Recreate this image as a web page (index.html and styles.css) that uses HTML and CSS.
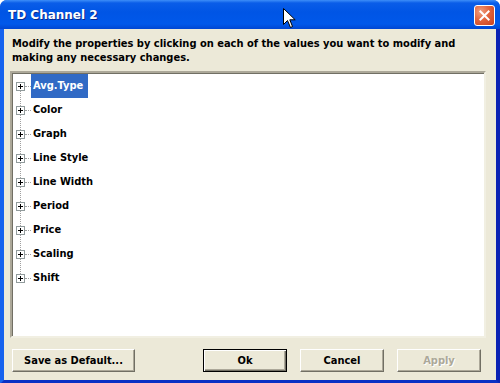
FILE: index.html
```html
<!DOCTYPE html>
<html>
  <head>
    <title>TD Channel 2</title>
    <link rel="stylesheet" href="styles.css">
  </head>
  <body>
    <div class="window">
      <div class="titlebar">
        <span class="title">TD Channel 2</span>
        <button class="close-btn" title="Close">
          <svg width="21" height="21" viewBox="0 0 21 21">
            <path d="M6 6L15 15M15 6L6 15" stroke="#fff" stroke-width="2.2" stroke-linecap="square" />
          </svg>
        </button>
      </div>
      <div class="client">
        <p class="hint">Modify the properties by clicking on each of the values you want to modify and making any necessary changes.</p>
        <div class="tree">
          <ul class="tree-list">
            <li class="tree-item"><span class="expander"></span><span class="dots"></span><span class="label selected">Avg.Type</span></li>
            <li class="tree-item"><span class="expander"></span><span class="dots"></span><span class="label">Color</span></li>
            <li class="tree-item"><span class="expander"></span><span class="dots"></span><span class="label">Graph</span></li>
            <li class="tree-item"><span class="expander"></span><span class="dots"></span><span class="label">Line Style</span></li>
            <li class="tree-item"><span class="expander"></span><span class="dots"></span><span class="label">Line Width</span></li>
            <li class="tree-item"><span class="expander"></span><span class="dots"></span><span class="label">Period</span></li>
            <li class="tree-item"><span class="expander"></span><span class="dots"></span><span class="label">Price</span></li>
            <li class="tree-item"><span class="expander"></span><span class="dots"></span><span class="label">Scaling</span></li>
            <li class="tree-item"><span class="expander"></span><span class="dots"></span><span class="label">Shift</span></li>
          </ul>
        </div>
        <div class="buttons">
          <button class="btn btn-save">Save as Default...</button>
          <div class="btn-group">
            <button class="btn btn-default">Ok</button>
            <button class="btn">Cancel</button>
            <button class="btn" disabled>Apply</button>
          </div>
        </div>
      </div>
      <!-- mouse pointer caught in the screenshot -->
      <svg class="cursor" width="13" height="21" viewBox="0 0 13 21">
        <path d="M0.5 0.5V16.5L4.5 12.5L7.5 19.5L9.5 18.5L6.8 11.8H12.2Z" fill="#fff" stroke="#000" stroke-width="1" />
      </svg>
    </div>
  </body>
</html>
```

FILE: styles.css
```css
body {
  margin: 0;
  font-family: "DejaVu Sans Condensed", "DejaVu Sans", sans-serif;
  font-size: 11px;
  font-weight: bold;
}
.window {
  position: relative;
  width: 500px;
  height: 383px;
  display: flex;
  flex-direction: column;
  background: #0a4fd8;
  border-radius: 7px 7px 0 0;
  overflow: hidden;
}
.titlebar {
  height: 29px;
  flex: none;
  display: flex;
  align-items: center;
  justify-content: space-between;
  padding: 0 5px 0 8px;
  background: linear-gradient(to bottom, #3d8ef8 0px, #0a5de8 3px, #0055e5 12px, #0058ea 24px, #0046d2 29px);
}
.title {
  color: #fff;
  font-family: "DejaVu Sans", sans-serif;
  font-size: 12px;
  text-shadow: 1px 1px 0 #0b2a8c;
  margin-top: 1px;
}
.close-btn {
  width: 21px;
  height: 21px;
  padding: 0;
  border: 1px solid #fff;
  border-radius: 3px;
  background: radial-gradient(circle at 30% 30%, #f0a080 0%, #e2653e 45%, #c8401e 100%);
  display: flex;
  align-items: center;
  justify-content: center;
  margin-top: 1px;
}
.close-btn svg {
  display: block;
}
.client {
  flex: 1;
  display: flex;
  flex-direction: column;
  background: #ece9d8;
  border-left: 4px solid #1662ee;
  border-right: 4px solid #0a22b4;
  border-bottom: 4px solid #0a30c4;
  padding: 8px 10px 8px 6px;
}
.hint {
  margin: 0 0 6px 2px;
  line-height: 14px;
  color: #000;
}
.tree {
  height: 267px;
  background: #fff;
  border-style: solid;
  border-width: 2px;
  border-color: #aca899 #f1efe2 #f1efe2 #aca899;
  box-shadow: inset 1px 1px 0 #716f64;
  box-sizing: border-box;
}
.tree-list {
  position: relative;
  list-style: none;
  margin: 0;
  padding: 1px 0 0;
}
.tree-list::before {
  content: "";
  position: absolute;
  left: 8px;
  top: 13px;
  height: 192px;
  border-left: 1px dotted #a0a0a0;
}
.tree-item {
  height: 24px;
  display: flex;
  align-items: center;
  padding-left: 4px;
}
.expander {
  position: relative;
  width: 7px;
  height: 7px;
  border: 1px solid #919b9c;
  background: #fff;
  flex: none;
  z-index: 1;
}
.expander::before,
.expander::after {
  content: "";
  position: absolute;
  background: #000;
}
.expander::before {
  left: 1px;
  top: 3px;
  width: 5px;
  height: 1px;
}
.expander::after {
  left: 3px;
  top: 1px;
  width: 1px;
  height: 5px;
}
.dots {
  width: 6px;
  border-top: 1px dotted #a0a0a0;
  flex: none;
}
.label {
  height: 24px;
  line-height: 24px;
  padding: 0 2px;
  color: #000;
}
.label.selected {
  padding-right: 5px;
  background: #316ac5;
  color: #fff;
}
.buttons {
  display: flex;
  justify-content: space-between;
  margin-top: 11px;
  padding-left: 2px;
  padding-right: 5px;
}
.btn-group {
  display: flex;
  gap: 13px;
}
.btn {
  width: 84px;
  height: 23px;
  padding: 0;
  font-family: inherit;
  font-size: 11px;
  font-weight: bold;
  color: #000;
  background: #ece9d8;
  border-style: solid;
  border-width: 1px;
  border-color: #fff #716f64 #716f64 #fff;
  box-shadow: inset -1px -1px 0 #aca899;
}
.btn-save {
  width: 123px;
}
.btn-default {
  border-color: #000;
  box-shadow: inset 1px 1px 0 #fff, inset -1px -1px 0 #716f64, inset -2px -2px 0 #aca899;
}
.btn:disabled {
  color: #aca899;
  text-shadow: 1px 1px 0 #fff;
}
.cursor {
  position: absolute;
  left: 283px;
  top: 8px;
}
```
